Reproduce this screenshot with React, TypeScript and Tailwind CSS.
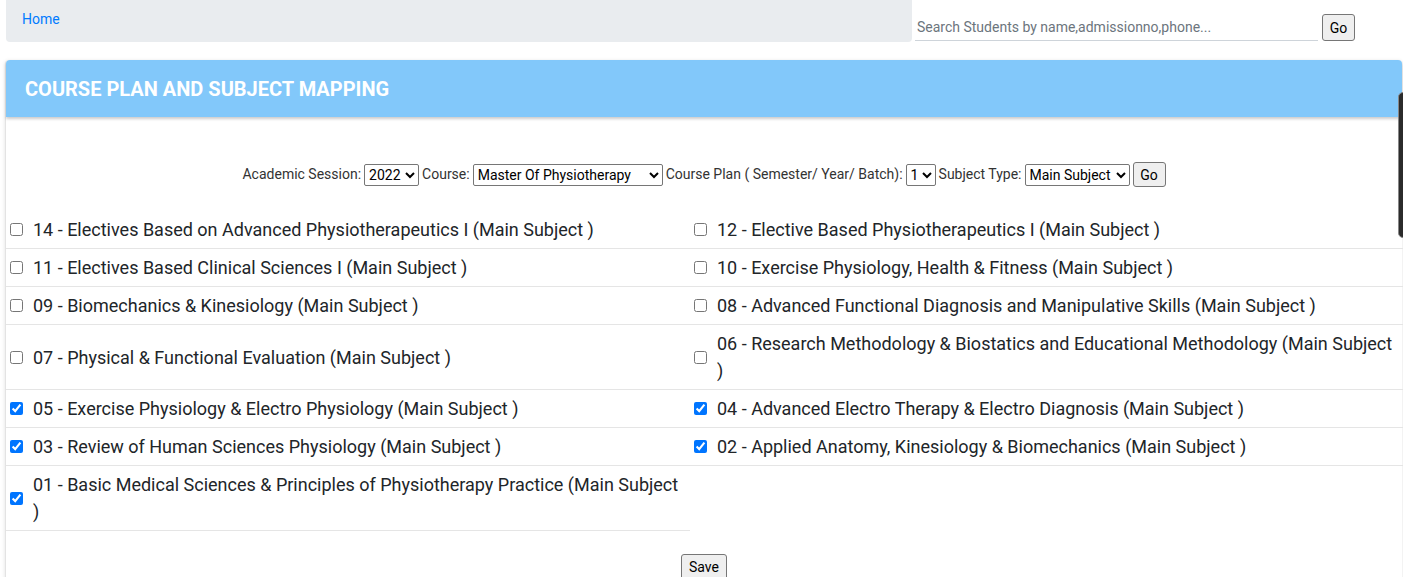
import React from 'react';

interface Subject {
  code: string;
  name: string;
  checked: boolean;
}

const subjects: Subject[] = [
  { code: '14', name: 'Electives Based on Advanced Physiotherapeutics I', checked: false },
  { code: '12', name: 'Elective Based Physiotherapeutics I', checked: false },
  { code: '11', name: 'Electives Based Clinical Sciences I', checked: false },
  { code: '10', name: 'Exercise Physiology, Health & Fitness', checked: false },
  { code: '09', name: 'Biomechanics & Kinesiology', checked: false },
  { code: '08', name: 'Advanced Functional Diagnosis and Manipulative Skills', checked: false },
  { code: '07', name: 'Physical & Functional Evaluation', checked: false },
  { code: '06', name: 'Research Methodology & Biostatics and Educational Methodology', checked: false },
  { code: '05', name: 'Exercise Physiology & Electro Physiology', checked: true },
  { code: '04', name: 'Advanced Electro Therapy & Electro Diagnosis', checked: true },
  { code: '03', name: 'Review of Human Sciences Physiology', checked: true },
  { code: '02', name: 'Applied Anatomy, Kinesiology & Biomechanics', checked: true },
  { code: '01', name: 'Basic Medical Sciences & Principles of Physiotherapy Practice', checked: true },
];

const font = { fontFamily: 'Roboto, "Liberation Sans", sans-serif' };

function NativeButton({ children, className = '' }: { children: React.ReactNode; className?: string }) {
  return (
    <button
      className={`border border-[#767676] bg-[#efefef] rounded-[3px] text-[14px] text-black leading-none ${className}`}
    >
      {children}
    </button>
  );
}

export default function App() {
  return (
    <div className="relative min-h-[577px] bg-white text-[#212529] overflow-hidden" style={font}>
      {/* Top bar */}
      <div className="flex items-start">
        <div className="ml-[6px] w-[906px] h-[42px] bg-[#e9ecef] rounded-b-[4px] pl-[16px] pt-[7px]">
          <a className="text-[14px] text-[#007bff]">Home</a>
        </div>
        <div className="flex items-start ml-[3px] pt-[14px]">
          <input
            className="w-[403px] h-[27px] border-b border-[#ced4da] text-[14px] px-[2px] outline-none placeholder:text-[#6c757d]"
            placeholder="Search Students by name,admissionno,phone..."
          />
          <NativeButton className="ml-[4px] w-[33px] h-[27px]">Go</NativeButton>
        </div>
      </div>

      {/* Card */}
      <div className="ml-[5px] mt-[18px] w-[1397px] border-l border-[#e3e3e3] rounded-t-[4px] shadow-[0_1px_4px_rgba(0,0,0,0.12)]">
        <div className="h-[57px] bg-[#82c8fa] rounded-t-[4px] flex items-center pl-[19px] shadow-[0_2px_3px_rgba(0,0,0,0.2)]">
          <h2 className="text-[20px] font-bold text-white">COURSE PLAN AND SUBJECT MAPPING</h2>
        </div>

        <div className="pt-[45px]">
          <div className="flex items-center justify-center text-[14px] text-[#333] gap-[3px] h-[25px]">
            <span>Academic Session:</span>
            <select className="h-[22px] w-[55px] border border-[#767676] rounded-[2px] text-[14px] text-black">
              <option>2022</option>
            </select>
            <span>Course:</span>
            <select className="h-[22px] w-[190px] border border-[#767676] rounded-[2px] text-[14px] text-black">
              <option>Master Of Physiotherapy</option>
            </select>
            <span>Course Plan ( Semester/ Year/ Batch):</span>
            <select className="h-[22px] w-[30px] border border-[#767676] rounded-[2px] text-[14px] text-black">
              <option>1</option>
            </select>
            <span>Subject Type:</span>
            <select className="h-[22px] w-[105px] border border-[#767676] rounded-[2px] text-[14px] text-black">
              <option>Main Subject</option>
            </select>
            <NativeButton className="w-[33px] h-[25px]">Go</NativeButton>
          </div>

          <div className="grid grid-cols-[684px_713px] mt-[24px]">
            {subjects.map((s) => (
              <label
                key={s.code}
                className="flex items-center border-b border-[#e5e5e5] py-[5px] pl-[4px] pr-[6px] text-[18px] leading-[27px] text-[#212529]"
              >
                <input type="checkbox" defaultChecked={s.checked} className="w-[13px] h-[13px] shrink-0 mr-[10px]" />
                <span>
                  {s.code} - {s.name} (Main Subject )
                </span>
              </label>
            ))}
          </div>

          <div className="flex justify-center pt-[23px] pb-[8px]">
            <NativeButton className="w-[46px] h-[26px]">Save</NativeButton>
          </div>
        </div>
      </div>

      {/* Floating side handle */}
      <div className="absolute left-[1398px] top-[92px] w-[12px] h-[146px] bg-[#2b2b2b] rounded-[5px] border border-[#888]" />
    </div>
  );
}
